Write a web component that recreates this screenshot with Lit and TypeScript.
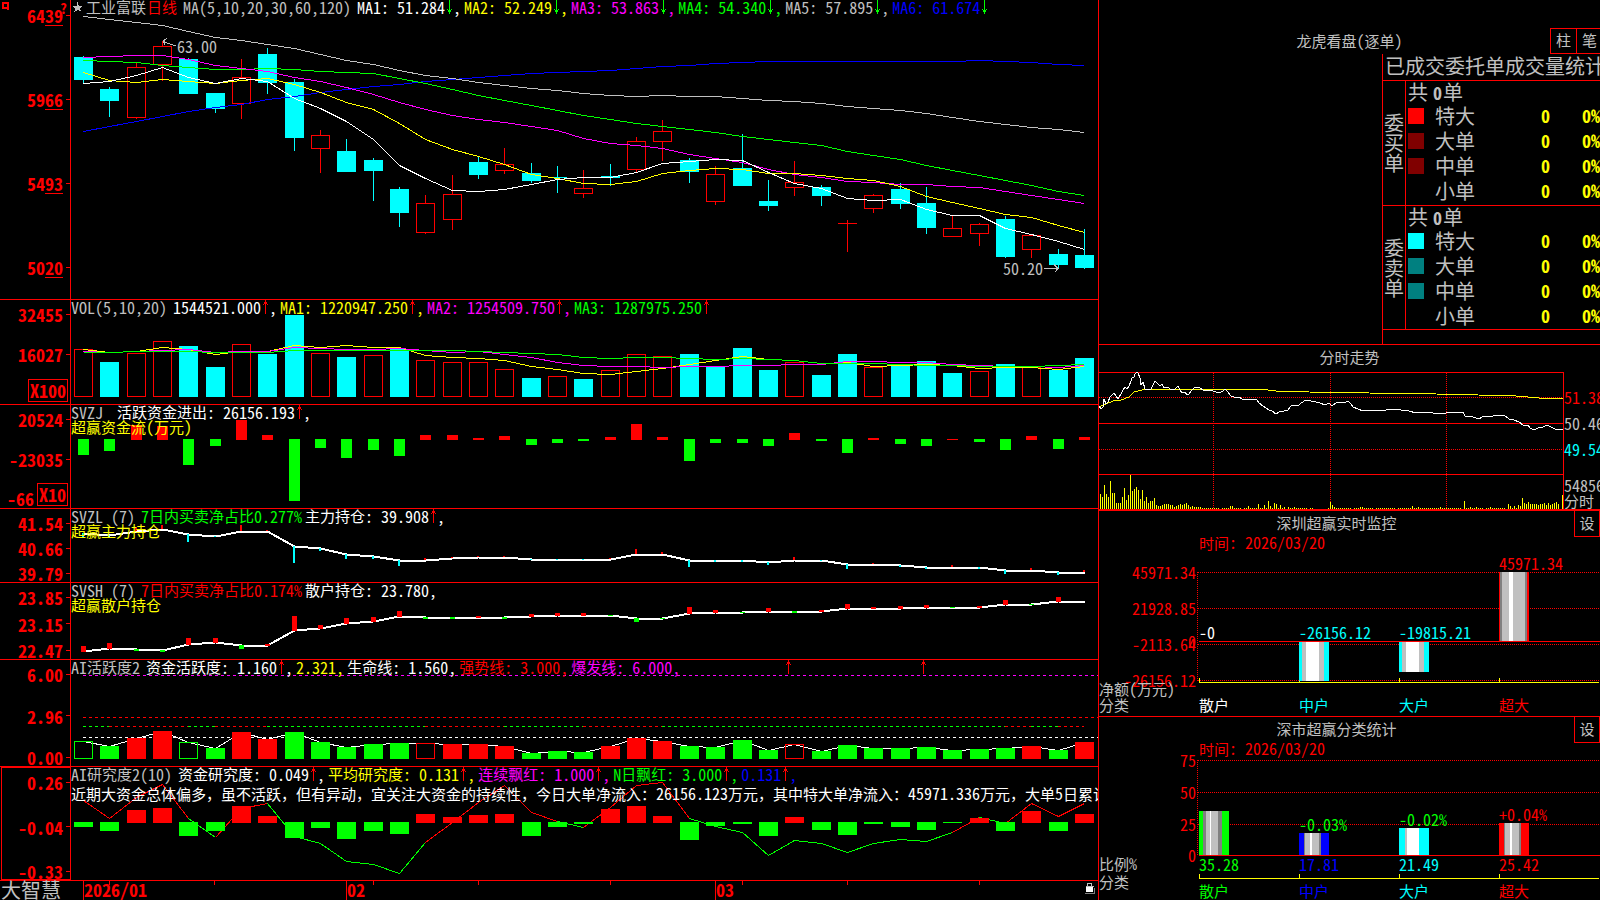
import { LitElement, html, svg, css } from "lit";
import { customElement } from "lit/decorators.js";

const RED = "#ff0000";
const CYAN = "#00ffff";
const GREEN = "#00ff00";
const YELLOW = "#ffff00";
const WHITE = "#ffffff";
const MAGENTA = "#ff00ff";
const BLUE = "#0000ff";
const SILVER = "#c0c0c0";
const GRAY = "#808080";

/* ---------- data ---------- */

// kind, body top, body bottom, high, low
const candles: [string, number, number, number, number][] = [
  ["c", 57, 80, 56, 84], ["c", 89, 101, 87, 117], ["r", 67, 118, 63, 119], ["r", 46, 65, 41, 81],
  ["c", 59, 94, 58, 94], ["c", 93, 109, 93, 113], ["r", 77, 104, 59, 119], ["c", 54, 83, 48, 94],
  ["c", 82, 138, 79, 151], ["r", 135, 149, 130, 173], ["c", 151, 172, 139, 172], ["c", 160, 171, 158, 201],
  ["c", 189, 213, 187, 227], ["r", 203, 233, 195, 234], ["r", 194, 220, 175, 230], ["c", 162, 175, 156, 179],
  ["r", 164, 171, 148, 174], ["c", 173, 181, 163, 183], ["c", 177, 178, 166, 193], ["r", 188, 194, 170, 198],
  ["c", 176, 178, 164, 186], ["r", 141, 170, 137, 172], ["r", 131, 142, 120, 161], ["c", 160, 172, 158, 183],
  ["r", 174, 202, 166, 205], ["c", 168, 186, 134, 186], ["c", 201, 206, 180, 211], ["r", 182, 188, 161, 196],
  ["c", 187, 196, 185, 206], ["r", 223, 224, 220, 252], ["r", 195, 209, 194, 213], ["c", 189, 204, 183, 209],
  ["c", 203, 228, 187, 234], ["r", 228, 237, 216, 237], ["r", 224, 234, 223, 246], ["c", 219, 257, 216, 258],
  ["r", 235, 250, 235, 258], ["c", 254, 265, 249, 269], ["c", 255, 268, 229, 269],
];

const ma = {
  m5: [83, 81, 75, 67, 77, 83, 78, 81, 98, 108, 121, 139, 165, 178, 190, 191, 189, 184, 179, 177, 177, 172, 163, 161, 159, 160, 172, 183, 188, 198, 200, 199, 209, 215, 215, 228, 234, 241, 249],
  m10: [72, 80, 82, 79, 81, 83, 80, 78, 84, 92, 102, 109, 123, 139, 149, 156, 164, 174, 178, 183, 184, 181, 173, 170, 168, 169, 173, 173, 175, 178, 180, 186, 196, 202, 208, 214, 217, 225, 232],
  m20: [57, 56, 55, 55, 59, 65, 68, 71, 77, 81, 87, 94, 102, 109, 115, 119, 122, 126, 130, 138, 143, 145, 148, 154, 158, 162, 169, 174, 177, 181, 182, 184, 184, 186, 187, 191, 195, 199, 203],
  m30: [60, 61, 62, 65, 67, 69, 69, 68, 69, 71, 72, 73, 78, 83, 89, 95, 100, 105, 110, 115, 119, 123, 126, 129, 132, 136, 139, 142, 145, 151, 155, 159, 165, 170, 175, 180, 185, 191, 195],
  m60: [16, 19, 22, 25, 31, 37, 40, 44, 48, 54, 60, 64, 70, 75, 78, 82, 85, 88, 90, 93, 95, 96, 95, 96, 96, 98, 100, 101, 103, 106, 108, 110, 113, 117, 121, 124, 127, 129, 132],
  m120: [131, 126, 121, 116, 111, 107, 104, 99, 96, 92, 89, 86, 84, 81, 79, 77, 75, 73, 72, 71, 70, 68, 66, 65, 63, 62, 61, 61, 61, 61, 61, 61, 61, 61, 60, 61, 62, 64, 65],
};

const volKinds = "rcrrccrccrcrcrrrrcrcrrrccccrccrcccrcrcc";
const volTops = [349, 362, 353, 341, 346, 367, 344, 354, 315, 353, 357, 355, 349, 360, 362, 362, 369, 378, 376, 379, 370, 354, 356, 354, 367, 348, 370, 362, 375, 354, 367, 365, 361, 373, 371, 364, 367, 370, 358];
const vm5 = [349, 352, 351, 347, 349, 354, 351, 351, 345, 347, 345, 347, 347, 355, 357, 358, 360, 366, 369, 373, 374, 371, 368, 364, 360, 356, 359, 360, 363, 362, 366, 365, 364, 365, 368, 367, 367, 369, 366];
const vm10 = [351, 352, 351, 350, 349, 352, 351, 351, 347, 348, 349, 349, 348, 350, 352, 351, 354, 357, 362, 365, 366, 366, 367, 366, 366, 365, 365, 364, 364, 361, 361, 362, 362, 364, 365, 366, 366, 367, 365];
const vm20 = [352, 352, 351, 351, 351, 352, 352, 352, 350, 350, 350, 350, 350, 350, 350, 351, 352, 353, 354, 357, 358, 357, 357, 358, 359, 358, 359, 360, 363, 363, 363, 364, 365, 365, 366, 366, 366, 365, 364];

const flowEnds = [455, 451, 425, 426, 465, 446, 420, 435, 501, 448, 458, 450, 456, 435, 435, 438, 436, 445, 443, 441, 437, 424, 437, 461, 443, 443, 446, 433, 441, 453, 438, 444, 446, 439, 442, 450, 436, 449, 437];

const mainLine = [533, 535, 531, 529, 534, 536, 531, 531, 546, 548, 554, 556, 560, 560, 558, 557, 557, 559, 559, 559, 559, 554, 554, 560, 560, 560, 562, 560, 560, 564, 564, 565, 567, 567, 567, 570, 570, 572, 572];
const mainBars = [4, 2, -4, -4, 8, 1, -6, -1, 17, 3, 5, 3, 6, -2, -1, -1, -1, 1, 1, 1, -1, -5, -2, 7, 2, 2, 3, -3, 1, 5, -1, 2, 2, -2, 2, 4, -2, 3, -2];
const retailLine = [651, 648, 649, 650, 644, 642, 645, 645, 630, 628, 623, 621, 616, 617, 617, 617, 617, 616, 615, 615, 615, 618, 618, 613, 612, 612, 611, 611, 611, 608, 608, 608, 607, 607, 607, 604, 604, 601, 601];
const retailBars = [5, 5, -2, -2, 6, 4, -4, 1, 14, 3, 5, 4, 5, -2, -2, 1, -2, 2, 2, 2, -1, -4, -1, 6, 2, -1, 3, -2, 1, 4, 1, 2, 2, -1, 1, 4, -1, 4, 0];

// lower case = outlined bar
const actKinds = "gGRRgGRRGGGGGrRRRGGGRRRGGGGrGGGGGGGGRGR";
const actTops = [741, 746, 738, 731, 742, 748, 732, 739, 732, 742, 747, 744, 743, 743, 744, 744, 746, 753, 751, 752, 746, 738, 741, 746, 747, 740, 750, 744, 751, 745, 748, 748, 747, 750, 749, 748, 746, 750, 742];
const actRuns: [number, number, string][] = [
  [0, 1, GREEN], [1, 4, RED], [4, 5, GREEN], [5, 7, RED], [7, 13, GREEN], [13, 16, RED],
  [16, 19, GREEN], [19, 22, RED], [22, 35, GREEN], [35, 36, RED], [36, 37, GREEN], [37, 38, RED],
];

const resEnds = [827, 831, 810, 808, 836, 831, 806, 816, 838, 828, 839, 831, 834, 814, 817, 815, 814, 836, 827, 824, 809, 806, 816, 840, 826, 824, 836, 817, 830, 835, 824, 827, 830, 823, 818, 831, 811, 831, 814];
const resLine = [800, 818, 797, 784, 818, 837, 808, 803, 836, 843, 861, 864, 873, 842, 822, 802, 785, 812, 821, 827, 807, 785, 782, 818, 826, 832, 855, 840, 843, 852, 843, 839, 841, 832, 817, 823, 803, 816, 803];
const resRuns: [number, number, string][] = [
  [0, 4, RED], [4, 5, GREEN], [5, 7, RED], [7, 13, GREEN], [13, 18, RED], [18, 19, GREEN],
  [19, 23, RED], [23, 33, GREEN], [33, 34, RED], [34, 35, GREEN], [35, 38, RED],
];

const priceTrack =
  "1099,406 1101,409 1103,407 1104,399 1106,404 1108,402 1110,397 1113,394 1114,393 1116,396 1118,399 1121,394 1123,390 1125,387 1127,389 1129,386 1131,381 1132,378 1134,377 1135,374 1137,372 1138,373 1140,378 1141,385 1143,382 1145,389 1148,389 1151,389 1153,385 1155,381 1157,383 1160,386 1162,384 1164,388 1168,387 1171,390 1175,389 1178,386 1180,390 1182,393 1185,392 1187,395 1189,394 1192,390 1195,387 1199,387 1203,390 1208,390 1213,391 1219,393 1223,391 1225,389 1228,392 1231,396 1234,397 1239,397 1242,399 1248,400 1253,399 1257,400 1259,403 1263,406 1266,408 1269,410 1272,411 1276,414 1279,412 1284,411 1288,410 1291,406 1294,405 1298,406 1301,403 1306,400 1311,401 1316,402 1320,403 1325,405 1329,403 1332,406 1336,403 1339,402 1344,403 1348,401 1351,404 1353,407 1358,409 1363,411 1369,410 1373,410 1379,410 1386,410 1393,409 1401,410 1409,411 1416,413 1421,412 1428,412 1438,414 1446,413 1453,412 1458,413 1463,412 1465,416 1473,417 1479,419 1484,416 1493,416 1501,415 1505,416 1509,419 1514,420 1519,422 1523,425 1528,425 1530,428 1534,430 1538,428 1543,427 1547,425 1551,427 1555,429 1563,429";
const avgTrack =
  "1099,407 1106,404 1113,401 1121,400 1129,397 1134,392 1142,390 1146,389 1259,389 1276,391 1309,392 1369,393 1436,394 1478,395 1516,396 1539,398 1563,399";

const tickHead = [15, 12, 24, 15, 12, 28, 16, 16, 6, 6, 6, 12, 21, 9, 14, 35, 18, 20, 22, 19, 10, 19, 8, 12, 6, 8, 8, 11, 4, 3, 3, 4, 5, 5, 5, 4, 4, 2, 3, 4, 5, 4, 5, 6, 4, 2, 3, 2, 2, 2, 2];
const tickPeaks: Record<number, number> = {
  65: 3, 66: 3, 74: 3, 79: 5, 82: 4, 84: 8, 85: 3, 87: 6, 88: 5, 90: 4, 92: 2, 94: 2, 97: 2, 115: 7, 116: 4, 117: 2,
  130: 2, 131: 2, 156: 3, 159: 2, 170: 2, 182: 8, 185: 2, 188: 2, 195: 2, 204: 5, 205: 3, 207: 3, 209: 4, 210: 3,
  211: 11, 212: 6, 213: 5, 214: 7, 215: 5, 216: 5, 217: 5, 218: 5, 219: 4, 220: 5, 221: 5, 222: 6, 223: 4, 224: 6,
  225: 4, 226: 5, 227: 6, 228: 7, 229: 5, 231: 14,
};
const tickHeights = Array.from({ length: 232 }, (_, i) =>
  i < tickHead.length ? tickHead[i] : tickPeaks[i] ?? (i === 230 || (i > 106 && i < 114) || i % 11 === 5 ? 0 : 1),
);

/* ---------- drawing helpers ---------- */

const cx = (i: number) => Math.round(83 + 26.34 * i);
const pts = (ys: number[], from = 0, to = ys.length - 1) =>
  ys.slice(from, to + 1).map((y, k) => `${cx(from + k) + 0.5},${y + 0.5}`).join(" ");
const line = (ys: number[], color: string, width = 1) =>
  svg`<polyline fill="none" stroke=${color} stroke-width=${width} points=${pts(ys)} />`;
const block = (x: number, y: number, w: number, h: number, color: string) =>
  svg`<rect x=${x} y=${y} width=${w} height=${h} fill=${color} />`;
const frame = (x: number, y: number, w: number, h: number, color: string) =>
  svg`<rect x=${x + 0.5} y=${y + 0.5} width=${w - 1} height=${h - 1} fill="none" stroke=${color} />`;
const seg = (x1: number, y1: number, x2: number, y2: number, color: string, dash = "") =>
  svg`<line x1=${x1} y1=${y1} x2=${x2} y2=${y2} stroke=${color} stroke-dasharray=${dash || "none"} />`;

const runs = (text: string) => text.match(/[\x00-\xff]+|[^\x00-\xff]+/g) ?? [];
const isLatin = (s: string) => s.charCodeAt(0) < 256;

// Han text and half-width text run at separate sizes
const mix = (text: string) => runs(text).map((s) => (isLatin(s) ? html`<span class="lat">${s}</span>` : s));
const label = (x: number, y: number, text: string, color: string, anchor = "start") =>
  svg`<text x=${x} y=${y + 6} fill=${color} text-anchor=${anchor}>${runs(text).map((s) =>
    isLatin(s) ? svg`<tspan class="lat">${s}</tspan>` : svg`<tspan>${s}</tspan>`,
  )}</text>`;

const arrow = (dir: "up" | "down") =>
  dir === "up"
    ? html`<svg class="arrow" viewBox="0 0 8 14"><path d="M4 0H5V14H4ZM3 2H6V4H3ZM2 4H3V5H2ZM6 4H7V5H6Z" fill="#f00" /></svg>`
    : html`<svg class="arrow" viewBox="0 0 8 14"><path d="M4 0H5V14H4ZM3 10H6V12H3ZM2 9H3V10H2ZM6 9H7V10H6Z" fill="#0f0" /></svg>`;

type Reading = { text: string; tone: string; dir?: "up" | "down"; tail?: boolean };
const readings = (title: unknown, items: Reading[]) => html`
  <div class="readings">
    <span class="title">${title}</span>
    ${items.map(
      (r) => html`<span class="reading ${r.tone}">${mix(r.text)}${r.dir ? arrow(r.dir) : ""}${
        r.tail === false ? "" : html`<span class="lat">,</span>`
      }</span>`,
    )}
  </div>
`;

const plot = (y: number, h: number, content: unknown) => html`
  <svg class="plot" viewBox="71 ${y} 1027 ${h}" preserveAspectRatio="none">${content}</svg>
`;

const tube = (x: number, y: number, h: number, stripes: [number, string][]) => {
  let at = x;
  return stripes.map(([w, color]) => {
    const r = block(at, y, w, h, color);
    at += w;
    return r;
  });
};

/* ---------- element ---------- */

@customElement("app-root")
export class AppRoot extends LitElement {
  static styles = css`
    :host {
      display: block;
      height: 100vh;
      background: #000;
      color: #c0c0c0;
      overflow: hidden;
      font-family: "Noto Sans Mono CJK SC", "DejaVu Sans Mono", "Noto Sans CJK SC", monospace;
      font-size: 15px;
      line-height: 16px;
      white-space: nowrap;
    }
    * { box-sizing: border-box; }
    svg { shape-rendering: crispEdges; display: block; }
    svg text { font-size: 15px; white-space: pre; }
    .lat { font-size: 16px; white-space: pre; }
    .screen {
      display: grid;
      grid-template-columns: minmax(0, 1fr) 502px;
      height: 100%;
    }
    .charts {
      display: grid;
      grid-template-rows: 300fr 105fr 104fr 74fr 77fr 107fr 114fr 19px;
      min-height: 0;
    }
    .panel {
      display: grid;
      grid-template-columns: 71px minmax(0, 1fr);
      grid-template-rows: minmax(0, 1fr);
      border-bottom: 1px solid #f00;
      min-height: 0;
    }
    .axis {
      display: flex;
      flex-direction: column;
      justify-content: space-between;
      padding: 6px 0 1px;
      border-right: 1px solid #f00;
      color: #f00;
      font-size: 18px;
      font-weight: 700;
      position: relative;
    }
    .axis.price { padding: 7px 0 24px; }
    .axis.free { justify-content: flex-start; padding-bottom: 0; }
    .free .mark + .mark { margin-top: 24px; }
    .axis.selected { outline: 1px solid #f00; outline-offset: -1px; margin-left: 1px; padding-top: 7px; }
    .mark {
      display: flex;
      justify-content: flex-end;
      align-items: center;
      gap: 3px;
      height: 16px;
      flex: none;
    }
    .mark::after { content: ""; width: 4px; height: 1px; background: #f00; }
    .quote { display: flex; height: 16px; }
    .cents { border-bottom: 1px solid #f00; height: 19px; }
    .unit {
      border: 1px solid #f00;
      height: 23px;
      line-height: 20px;
      padding: 0 1px;
    }
    .foot {
      display: flex;
      justify-content: flex-end;
      align-items: flex-end;
      gap: 3px;
      margin-top: auto;
      padding: 0 2px 2px 0;
    }
    .corner { position: absolute; left: 2px; top: 2px; }
    .help { position: absolute; right: 3px; top: 0; font-size: 14px; }
    .view {
      display: grid;
      grid-template-columns: minmax(0, 1fr);
      grid-template-rows: minmax(0, 1fr);
      overflow: hidden;
      min-height: 0;
    }
    .plot { grid-area: 1 / 1; width: 100%; height: 100%; }
    .notes { grid-area: 1 / 1; z-index: 1; }
    .readings { display: flex; gap: 3px; height: 14px; line-height: 14px; }
    .title { display: flex; margin-right: 3px; }
    .reading { display: flex; white-space: pre; }
    .arrow { width: 8px; height: 14px; }
    .star { width: 14px; height: 14px; margin-right: 1px; }
    .name { font-size: 15px; }
    .period { color: #f00; margin: 0 6px 0 1px; }
    .caption { color: #ff0; line-height: 15px; }
    .advice { color: #fff; line-height: 24px; margin: 0; }
    .white { color: #fff; }
    .yellow { color: #ff0; }
    .magenta { color: #f0f; }
    .green { color: #0f0; }
    .silver { color: #c0c0c0; }
    .blue { color: #00f; }
    .red { color: #f00; }
    .cyan { color: #0ff; }

    .timeline {
      display: grid;
      grid-template-columns: 71px minmax(0, 1fr);
    }
    .brand { font-size: 20px; line-height: 18px; padding-left: 1px; }
    .months {
      grid-area: 1 / 1;
      display: grid;
      grid-template-columns: 13fr 263fr 369fr 368fr 14px;
      color: #f00;
      font-size: 18px;
      font-weight: 700;
      line-height: 17px;
    }
    .lock { width: 11px; height: 13px; margin-top: 1px; }

    .side {
      display: grid;
      grid-template-rows: 345fr 166fr 206fr 183fr;
      border-left: 1px solid #f00;
      overflow: hidden;
      min-height: 0;
    }
    .box { border-bottom: 1px solid #f00; overflow: hidden; min-height: 0; display: flex; flex-direction: column; }
    .box:last-child { border-bottom: 0; }
    .box.thick { border-bottom-width: 2px; }
    .bar { display: grid; grid-template-columns: minmax(0, 1fr) 26px; height: 26px; flex: none; }
    .bar h2 { margin: 0; font-size: 15px; font-weight: 400; line-height: 24px; text-align: center; }
    .bar.wide { grid-template-columns: 50px minmax(0, 1fr) 50px; }
    .wide h2 { grid-column: 2; }
    .tools { display: flex; }
    button {
      flex: none;
      width: 26px;
      height: 26px;
      padding: 0 0 2px;
      border: 1px solid #f00;
      border-top-width: 0;
      background: #000;
      color: #c0c0c0;
      font: inherit;
    }
    .wide button { border-top-width: 1px; border-right-width: 0; }
    .orders { padding-top: 28px; }
    .ledger { flex: 1; margin-left: auto; width: 218px; border-left: 1px solid #f00; }
    table { width: 217px; table-layout: fixed; border-spacing: 0; font-size: 20px; line-height: 21px; }
    caption { text-align: left; padding-left: 2px; height: 26px; line-height: 24px; }
    .heading { display: block; width: 215px; overflow: hidden; }
    th { font-weight: 400; padding: 0; }
    td, .kind, .sum { height: 25px; padding: 0; vertical-align: top; }
    .top > * { height: 25px; border-top: 1px solid #f00; }
    .end { border-bottom: 1px solid #f00; }
    .who { border-right: 1px solid #f00; white-space: normal; padding: 0 1px; line-height: 20px; }
    .sum { padding-left: 2px; text-align: left; }
    .sum b, .num { font-size: 18px; font-weight: 700; }
    .sum b { margin: 0 1px 0 5px; }
    .num { color: #ff0; text-align: right; }
    .kind { text-align: left; }
    .chip { display: block; width: 16px; height: 16px; margin: 3px 0 0 2px; }
    .c1 { background: #f00; }
    .c2 { background: #800000; }
    .c3 { background: #0ff; }
    .c4 { background: #008080; }
    .bar.plain { height: 27px; grid-template-columns: minmax(0, 1fr); }
    .intraday { display: grid; grid-template-columns: 465px 36px; flex: 1; min-height: 0; }
    .intraday svg { width: 100%; height: 100%; }
    .scale { display: flex; flex-direction: column; gap: 10px; padding: 17px 0 0; overflow: hidden; }
    .scale .lat { display: block; }
    .kindline { margin-top: auto; }
    .stats { width: 501px; flex: 1; min-height: 0; }
  `;

  private mark(v: string) {
    return html`<div class="mark">${v}</div>`;
  }

  private priceMark(v: string) {
    return html`<div class="mark"><span class="quote">${v.slice(0, 2)}<span class="cents">${v.slice(2)}</span></span></div>`;
  }

  private pricePanel() {
    const names: [string, string][] = [
      ["MA1: 51.284", "white"], ["MA2: 52.249", "yellow"], ["MA3: 53.863", "magenta"],
      ["MA4: 54.340", "green"], ["MA5: 57.895", "silver"], ["MA6: 61.674", "blue"],
    ];
    return html`
      <section class="panel">
        <div class="axis price">
          <svg class="corner" width="8" height="8" viewBox="0 0 8 8">
            <path d="M1 1H6V6H1Z" fill="none" stroke="#f00" stroke-width="2" />
            <path d="M5 6H7V8H5Z" fill="#f00" />
          </svg>
          <span class="help">?</span>
          ${["6439", "5966", "5493", "5020"].map((v) => this.priceMark(v))}
        </div>
        <div class="view">
          ${plot(0, 299, svg`
            ${candles.map(([k, t, b, h, l], i) => {
              const x = cx(i);
              if (k === "c")
                return svg`${block(x, h, 1, l - h, CYAN)}${block(x - 9, t, 19, b - t, CYAN)}`;
              return svg`${block(x, h, 1, t - h, RED)}${block(x, b, 1, l - b, RED)}${
                b - t < 2 ? block(x - 9, t, 19, 1, RED) : frame(x - 9, t, 19, b - t, RED)
              }`;
            })}
            ${line(ma.m120, BLUE)}${line(ma.m60, SILVER)}${line(ma.m30, GREEN)}
            ${line(ma.m20, MAGENTA)}${line(ma.m10, YELLOW)}${line(ma.m5, WHITE)}
            <path d="M176 46L163 41.5M163 41.5L167 38M163 41.5L165 45" stroke=${SILVER} fill="none" />
            ${label(177, 47, "63.00", SILVER)}
            <path d="M1044 268.5H1058M1054 264.5L1058 268.5L1055 272" stroke=${SILVER} fill="none" />
            ${label(1003, 269, "50.20", SILVER)}
          `)}
          <div class="notes">
            ${readings(
              html`<svg class="star" viewBox="0 0 14 14"><path d="M6.500 2L8 6H12L9 8.500L10.500 12L6.500 10L3 12L4.500 8.500L1.500 6H5.500Z" fill="#c0c0c0" /></svg
                ><span class="name">工业富联</span><span class="period">日线</span>${mix("MA(5,10,20,30,60,120)")}`,
              names.map(([text, tone], i) => ({ text, tone, dir: "down" as const, tail: i < 5 })),
            )}
          </div>
        </div>
      </section>
    `;
  }

  private volumePanel() {
    return html`
      <section class="panel">
        <div class="axis free">
          ${this.mark("32455")}${this.mark("16027")}
          <div class="foot"><span class="unit">X100</span></div>
        </div>
        <div class="view">
          ${plot(300, 104, svg`
            ${volTops.map((t, i) =>
              volKinds[i] === "c" ? block(cx(i) - 9, t, 19, 397 - t, CYAN) : frame(cx(i) - 9, t, 19, 397 - t, RED),
            )}
            ${line(vm5, YELLOW)}${line(vm10, MAGENTA)}${line(vm20, GREEN)}
          `)}
          <div class="notes">
            ${readings(mix("VOL(5,10,20)"), [
              { text: "1544521.000", tone: "white", dir: "up" },
              { text: "MA1: 1220947.250", tone: "yellow", dir: "up" },
              { text: "MA2: 1254509.750", tone: "magenta", dir: "up" },
              { text: "MA3: 1287975.250", tone: "green", dir: "up", tail: false },
            ])}
          </div>
        </div>
      </section>
    `;
  }

  private flowPanel() {
    return html`
      <section class="panel">
        <div class="axis free">
          ${this.mark("20524")}${this.mark("-23035")}
          <div class="foot">-66<span class="unit">X10</span></div>
        </div>
        <div class="view">
          ${plot(405, 103, svg`
            ${flowEnds.map((e, i) =>
              e < 440 ? block(cx(i) - 5, e, 11, 440 - e, RED) : block(cx(i) - 5, 439, 11, e - 439, GREEN),
            )}
          `)}
          <div class="notes">
            ${readings(mix("SVZJ "), [{ text: "活跃资金进出: 26156.193", tone: "white", dir: "up" }])}
            <div class="caption">${mix("超赢资金流(万元)")}</div>
          </div>
        </div>
      </section>
    `;
  }

  private holdingPanels() {
    return html`
      <section class="panel">
        <div class="axis">${["41.54", "40.66", "39.79"].map((v) => this.mark(v))}</div>
        <div class="view">
          ${plot(509, 73, svg`
            ${line(mainLine, WHITE, 2)}
            ${mainBars.map((h, i) =>
              h > 0 ? block(cx(i) - 1, mainLine[i], 2, h, CYAN) : block(cx(i) - 1, mainLine[i] + h, 2, -h, RED),
            )}
          `)}
          <div class="notes">
            ${readings(mix("SVZL (7)"), [
              { text: "7日内买卖净占比0.277%", tone: "green", tail: false },
              { text: "主力持仓: 39.908", tone: "white", dir: "up" },
            ])}
            <div class="caption">超赢主力持仓</div>
          </div>
        </div>
      </section>
      <section class="panel">
        <div class="axis">${["23.85", "23.15", "22.47"].map((v) => this.mark(v))}</div>
        <div class="view">
          ${plot(583, 76, svg`
            ${line(retailLine, WHITE, 2)}
            ${retailBars.map((h, i) =>
              h > 0
                ? block(cx(i) - 2, retailLine[i] - h, 5, h + 1, RED)
                : block(cx(i) - 2, retailLine[i], 5, -h, GREEN),
            )}
          `)}
          <div class="notes">
            ${readings(mix("SVSH (7)"), [
              { text: "7日内买卖净占比0.174%", tone: "red", tail: false },
              { text: "散户持仓: 23.780", tone: "white" },
            ])}
            <div class="caption">超赢散户持仓</div>
          </div>
        </div>
      </section>
    `;
  }

  private activityPanel() {
    return html`
      <section class="panel">
        <div class="axis">${["6.00", "2.96", "0.00"].map((v) => this.mark(v))}</div>
        <div class="view">
          ${plot(660, 106, svg`
            ${seg(83, 675.5, 1098, 675.5, MAGENTA, "3 3")}
            ${seg(83, 717.5, 1098, 717.5, RED, "3 3")}
            ${seg(83, 737.5, 1098, 737.5, WHITE, "3 3")}
            ${actRuns.map(([a, b, c]) => seg(cx(a), 726.5, cx(b), 726.5, c, "3 3"))}
            ${line(actTops, WHITE)}
            ${actTops.map((t, i) => {
              const k = actKinds[i];
              const color = k.toUpperCase() === "G" ? GREEN : RED;
              return k === k.toUpperCase()
                ? block(cx(i) - 9, t, 19, 759 - t, color)
                : frame(cx(i) - 9, t, 19, 759 - t, color);
            })}
            ${[788, 923].map(
              (x) => svg`<path d="M${x} 660h1v14h-1ZM${x - 1} 662h3v2h-3ZM${x - 2} 664h1v1h-1ZM${x + 2} 664h1v1h-1Z" fill=${RED} />`,
            )}
          `)}
          <div class="notes">
            ${readings(mix("AI活跃度2"), [
              { text: "资金活跃度: 1.160", tone: "white", dir: "up" },
              { text: "2.321", tone: "yellow" },
              { text: "生命线: 1.560", tone: "white" },
              { text: "强势线: 3.000", tone: "red" },
              { text: "爆发线: 6.000", tone: "magenta" },
            ])}
          </div>
        </div>
      </section>
    `;
  }

  private researchPanel() {
    return html`
      <section class="panel">
        <div class="axis selected">${["0.26", "-0.04", "-0.33"].map((v) => this.mark(v))}</div>
        <div class="view">
          ${plot(767, 113, svg`
            ${resRuns.map(
              ([a, b, c]) => svg`<polyline fill="none" stroke=${c} points=${pts(resLine, a, b)} />`,
            )}
            ${resEnds.map((e, i) =>
              e < 822 ? block(cx(i) - 9, e, 19, 823 - e, RED) : block(cx(i) - 9, 822, 19, e - 822, GREEN),
            )}
          `)}
          <div class="notes">
            ${readings(mix("AI研究度2(10)"), [
              { text: "资金研究度: 0.049", tone: "white", dir: "up" },
              { text: "平均研究度: 0.131", tone: "yellow", dir: "up" },
              { text: "连续飘红: 1.000", tone: "magenta", dir: "up" },
              { text: "N日飘红: 3.000", tone: "green", dir: "up" },
              { text: "0.131", tone: "blue", dir: "up" },
            ])}
            <p class="advice">${mix(
              "近期大资金总体偏多，虽不活跃，但有异动，宜关注大资金的持续性，今日大单净流入：26156.123万元，其中特大单净流入：45971.336万元，大单5日累计",
            )}</p>
          </div>
        </div>
      </section>
    `;
  }

  private timeline() {
    return html`
      <footer class="timeline">
        <div class="brand">大智慧</div>
        <div class="view">
          ${plot(881, 19, svg`
            ${[83, 346, 715].map((x) => block(x, 881, 1, 19, RED))}
            ${[109, 214, 373, 478, 610, 742, 847, 979].map((x) => block(x, 881, 1, 4, RED))}
          `)}
          <div class="months">
            <span></span><span>2026/01</span><span>02</span><span>03</span>
            <svg class="lock" viewBox="0 0 11 13">
              <path d="M3.500 5V1.500H7.500V5" fill="none" stroke="#c0c0c0" />
              <path d="M2 5H9V10H2Z" fill="#fff" />
              <path d="M1.500 4.500H9.500" stroke="#c0c0c0" />
              <path d="M1 11.500H10.500V6" fill="none" stroke="#808080" />
            </svg>
          </div>
        </div>
      </footer>
    `;
  }

  private orderGroup(side: string, chips: string[], last: boolean) {
    const kinds = ["特大", "大单", "中单", "小单"];
    return html`
      <tbody>
        <tr class="top">
          <th class="who ${last ? "end" : ""}" rowspan="5" scope="rowgroup">${side}</th>
          <th class="sum" colspan="4">共<b>0</b>单</th>
        </tr>
        ${kinds.map((k, i) => {
          const end = last && i === 3 ? "end" : "";
          return html`<tr>
            <td class=${end}>${chips[i] ? html`<span class="chip ${chips[i]}"></span>` : ""}</td>
            <th class="kind ${end}" scope="row">${k}</th>
            <td class="num ${end}">0</td>
            <td class="num ${end}">0%</td>
          </tr>`;
        })}
      </tbody>
    `;
  }

  private ordersBox() {
    return html`
      <section class="box orders">
        <div class="bar wide">
          <h2>${mix("龙虎看盘(逐单)")}</h2>
          <div class="tools"><button>柱</button><button>笔</button></div>
        </div>
        <div class="ledger">
          <table>
            <colgroup>
              <col style="width:23px" /><col style="width:29px" /><col style="width:65px" />
              <col style="width:50px" /><col style="width:50px" />
            </colgroup>
            <caption><span class="heading">已成交委托单成交量统计</span></caption>
            ${this.orderGroup("委买单", ["c1", "c2", "c2", ""], false)}
            ${this.orderGroup("委卖单", ["c3", "c4", "c4", ""], true)}
          </table>
        </div>
      </section>
    `;
  }

  private intradayBox() {
    return html`
      <section class="box thick">
        <div class="bar plain"><h2>分时走势</h2></div>
        <div class="intraday">
          <svg viewBox="1099 372 465 137" preserveAspectRatio="none">
            ${[1213.5, 1330.5, 1446.5].map((x) => seg(x, 373, x, 509, RED, "1 1"))}
            ${[397.5, 449.5].map((y) => seg(1099, y, 1563, y, RED, "1 1"))}
            ${tickHeights.map((h, i) => block(1100 + 2 * i, 509 - h, 1, h, YELLOW))}
            ${[372.5, 423.5, 474.5].map((y) => seg(1099, y, 1564, y, RED))}
            <polyline fill="none" stroke=${YELLOW} points=${avgTrack} />
            <polyline fill="none" stroke=${WHITE} points=${priceTrack} />
            ${seg(1563.5, 372, 1563.5, 509, RED)}
          </svg>
          <div class="scale">
            <span class="lat red">51.38</span>
            <span class="lat">50.46</span>
            <span class="lat cyan">49.54</span>
            <div class="kindline"><span class="lat">54856</span>分时</div>
          </div>
        </div>
      </section>
    `;
  }

  private monitorBox() {
    const cyanTube: [number, string][] = [[3, CYAN], [4, SILVER], [13, WHITE], [5, SILVER], [5, CYAN]];
    return html`
      <section class="box">
        <div class="bar"><h2>深圳超赢实时监控</h2><div class="tools"><button>设</button></div></div>
        <svg class="stats" viewBox="1099 537 501 179" preserveAspectRatio="xMinYMin meet">
          ${[572.5, 608.5, 644.5, 680.5].map((y) => seg(1198, y, 1600, y, RED, "1 1"))}
          ${seg(1197.5, 572, 1197.5, 681, RED, "1 1")}
          ${seg(1199, 641.5, 1600, 641.5, RED)}
          ${seg(1199, 682.5, 1599, 682.5, YELLOW)}
          ${[1199, 1299, 1399, 1499].map((x) => block(x, 678, 1, 5, YELLOW))}
          ${tube(1299, 642, 39, cyanTube)}
          ${tube(1399, 642, 30, cyanTube)}
          ${tube(1499, 572, 69, [[1, RED], [2, GRAY], [7, SILVER], [4, WHITE], [12, SILVER], [2, GRAY], [2, RED]])}
          ${label(1199, 543, "时间: 2026/03/20", RED)}
          ${label(1196, 573, "45971.34", RED, "end")}
          ${label(1196, 609, "21928.85", RED, "end")}
          ${label(1196, 645, "-2113.64", RED, "end")}
          ${label(1196, 642, "0", RED, "end")}
          ${label(1196, 681, "-26156.12", RED, "end")}
          ${label(1199, 633, "-0", WHITE)}
          ${label(1299, 633, "-26156.12", CYAN)}
          ${label(1399, 633, "-19815.21", CYAN)}
          ${label(1499, 564, "45971.34", RED)}
          ${label(1099, 689, "净额(万元)", SILVER)}
          ${label(1099, 705, "分类", SILVER)}
          ${label(1199, 705, "散户", WHITE)}
          ${label(1299, 705, "中户", CYAN)}
          ${label(1399, 705, "大户", CYAN)}
          ${label(1499, 705, "超大", RED)}
        </svg>
      </section>
    `;
  }

  private shareBox() {
    return html`
      <section class="box">
        <div class="bar"><h2>深市超赢分类统计</h2><div class="tools"><button>设</button></div></div>
        <svg class="stats" viewBox="1099 743 501 157" preserveAspectRatio="xMinYMin meet">
          ${[760.5, 792.5, 824.5].map((y) => seg(1198, y, 1600, y, RED, "1 1"))}
          ${seg(1197.5, 760, 1197.5, 855, RED, "1 1")}
          ${tube(1199, 811, 44, [[4, GREEN], [3, GRAY], [4, SILVER], [1, WHITE], [7, SILVER], [4, GRAY], [7, GREEN]])}
          ${tube(1299, 833, 22, [[5, BLUE], [1, GRAY], [5, SILVER], [2, WHITE], [7, SILVER], [2, GRAY], [8, BLUE]])}
          ${tube(1399, 828, 27, [[6, CYAN], [2, SILVER], [12, WHITE], [10, CYAN]])}
          ${tube(1499, 823, 32, [[5, RED], [1, GRAY], [5, SILVER], [2, WHITE], [7, SILVER], [2, GRAY], [8, RED]])}
          ${seg(1199, 855.5, 1600, 855.5, RED)}
          ${seg(1199, 878.5, 1599, 878.5, YELLOW)}
          ${[1199, 1299, 1399, 1499].map((x) => block(x, 874, 1, 5, YELLOW))}
          ${label(1199, 749, "时间: 2026/03/20", RED)}
          ${label(1196, 761, "75", RED, "end")}
          ${label(1196, 793, "50", RED, "end")}
          ${label(1196, 825, "25", RED, "end")}
          ${label(1196, 856, "0", RED, "end")}
          ${label(1299, 825, "-0.03%", GREEN)}
          ${label(1399, 820, "-0.02%", GREEN)}
          ${label(1499, 815, "+0.04%", RED)}
          ${label(1199, 865, "35.28", GREEN)}
          ${label(1299, 865, "17.81", BLUE)}
          ${label(1399, 865, "21.49", CYAN)}
          ${label(1499, 865, "25.42", RED)}
          ${label(1099, 864, "比例%", SILVER)}
          ${label(1099, 882, "分类", SILVER)}
          ${label(1199, 891, "散户", GREEN)}
          ${label(1299, 891, "中户", BLUE)}
          ${label(1399, 891, "大户", CYAN)}
          ${label(1499, 891, "超大", RED)}
        </svg>
      </section>
    `;
  }

  render() {
    return html`
      <div class="screen">
        <main class="charts">
          ${this.pricePanel()}${this.volumePanel()}${this.flowPanel()}${this.holdingPanels()}
          ${this.activityPanel()}${this.researchPanel()}${this.timeline()}
        </main>
        <aside class="side">
          ${this.ordersBox()}${this.intradayBox()}${this.monitorBox()}${this.shareBox()}
        </aside>
      </div>
    `;
  }
}
